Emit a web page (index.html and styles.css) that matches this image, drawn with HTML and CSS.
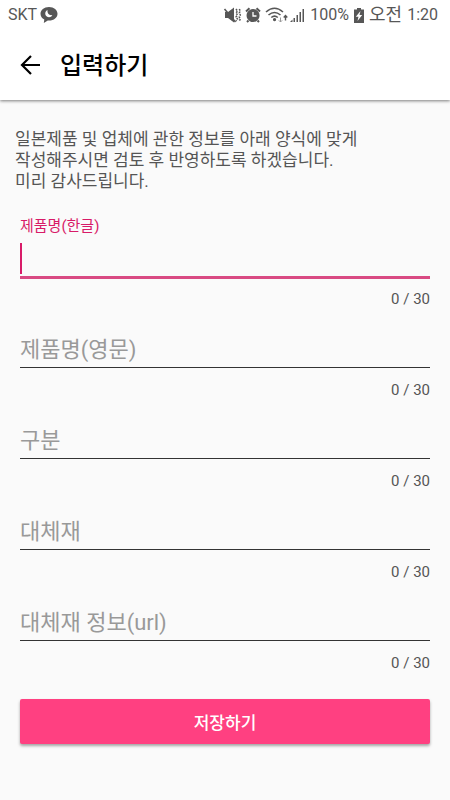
FILE: index.html
```html
<!DOCTYPE html>
<html lang="ko">
<head>
<meta charset="utf-8">
<meta name="viewport" content="width=device-width, initial-scale=1">
<title>입력하기</title>
<link rel="stylesheet" href="styles.css">
</head>
<body>
<header class="top">
  <div class="status">
    <span>SKT</span>
    <svg class="talk" width="18" height="16" viewBox="0 0 18 16" aria-hidden="true"><path fill="#575757" d="M9 0C4 0 .5 3 .5 6.800c0 2.500 1.500 4.600 3.800 5.800L3.800 16l4-2.500L9 13.600c5 0 8.500-3 8.500-6.800S14 0 9 0z"/><path fill="#fff" d="M7.500 3C5 4 4.500 7.500 6.500 9.300c2 1.700 5 1 5.800-1.300C9.500 8.800 7 6.500 7.500 3z"/></svg>
    <div class="indicators">
      <svg width="82" height="18" viewBox="0 0 82 18" aria-hidden="true">
        <g fill="#575757">
          <path d="M2 6h3l6-4.500v15L5 12H2z"/>
          <path d="M30 3a6.500 6.500 0 1 0 .1 0z"/>
          <path d="M23 5.500 26.500 2.300M37 5.500 33.500 2.300M25.500 14.500 24 16M34.500 14.500l1.500 1.500" stroke="#575757" stroke-width="2"/>
          <path d="M51.500 12a1.600 1.600 0 1 0 .1 0zM67 16l2.500-2.500V16zM70.500 12h1.500v4h-1.500zM73.500 9H75v7h-1.500zM76.500 6H78v10h-1.500zM79.500 3H81v13h-1.500z"/>
        </g>
        <g fill="none" stroke="#575757">
          <path stroke-width="1.500" stroke-dasharray="1.800 1" d="m13 3 1.500 2L13 7l1.500 2-1.500 2 1.500 2-1.500 2M16.300 3l1 2-1 2 1 2-1 2 1 2-1 2"/>
          <path stroke-width="1.600" d="M43 6c5.500-4.800 11.500-4.800 17 0M45.500 9c4-3.300 8-3.300 12 0M48.300 11.500c2-1.700 4.500-1.700 6.500 0"/>
          <path stroke="#999" d="M57.500 11.500v4.500m-1.700-1.700 1.700 1.700 1.700-1.700"/>
          <path stroke-width="1.400" d="M62.500 14.500v-5m-1.800 1.900 1.800-1.800 1.800 1.800"/>
        </g>
        <path d="m1.500 3 11 13" stroke="#575757" stroke-width="1.600"/>
        <path d="M30 6v4h3.500" fill="none" stroke="#fff" stroke-width="1.300"/>
      </svg>
      <span>100%</span>
      <svg class="battery" width="10" height="15" viewBox="0 0 10 15" aria-hidden="true"><path fill="#575757" d="M3 0h4v1.500h3V15H0V1.500h3z"/><path fill="#fff" d="M6.500 3 1.800 8.800h2.700L3.500 13l4.700-6H5.500z"/></svg>
      <span class="ampm">오전</span>
      <span>1:20</span>
    </div>
  </div>
  <div class="bar">
    <button class="back" type="button" aria-label="뒤로"><svg width="22" height="22" viewBox="0 0 22 22" aria-hidden="true"><path d="M20 11H2M11 2l-9 9 9 9" fill="none" stroke="#000" stroke-width="2.200"/></svg></button>
    <h1>입력하기</h1>
  </div>
</header>
<main>
  <p class="intro">일본제품 및 업체에 관한 정보를 아래 양식에 맞게<br>작성해주시면 검토 후 반영하도록 하겠습니다.<br>미리 감사드립니다.</p>
  <form>
    <div class="field active">
      <label for="name-ko">제품명(한글)</label>
      <input id="name-ko" type="text" maxlength="30">
      <span class="count">0 / 30</span>
    </div>
    <div class="field">
      <label for="name-en">제품명(영문)</label>
      <input id="name-en" type="text" maxlength="30">
      <span class="count">0 / 30</span>
    </div>
    <div class="field">
      <label for="category">구분</label>
      <input id="category" type="text" maxlength="30">
      <span class="count">0 / 30</span>
    </div>
    <div class="field">
      <label for="substitute">대체재</label>
      <input id="substitute" type="text" maxlength="30">
      <span class="count">0 / 30</span>
    </div>
    <div class="field">
      <label for="url">대체재 정보(url)</label>
      <input id="url" type="text" maxlength="30">
      <span class="count">0 / 30</span>
    </div>
    <button class="save" type="button">저장하기</button>
  </form>
</main>
</body>
</html>
```
FILE: styles.css
```css
* {
  box-sizing: border-box;
}

body {
  margin: 0;
  min-height: 100vh;
  background: #fafafa;
  color: #555;
  font-family: Roboto, "Noto Sans CJK KR", sans-serif;
}

.top {
  background: #fff;
  box-shadow: 0 1px 3px rgba(0, 0, 0, 0.5);
}

.status {
  display: flex;
  align-items: center;
  height: 30px;
  padding: 0 12px 0 8px;
  font-size: 16px;
  line-height: 30px;
  color: #575757;
}

.talk {
  margin-left: 3px;
}

.indicators {
  display: flex;
  align-items: center;
  gap: 5px;
  margin-left: auto;
}

.ampm {
  font-size: 18px;
}

.bar {
  display: flex;
  align-items: center;
  gap: 18px;
  height: 70px;
  padding: 0 20px;
}

.back {
  display: flex;
  padding: 0;
  border: 0;
  background: none;
}

h1 {
  margin: 0;
  padding-top: 2px;
  font-size: 24px;
  font-weight: 500;
  line-height: 36px;
  color: #000;
}

main {
  padding: 29px 20px;
}

.intro {
  margin: 0 -5px 26px;
  font-family: Roboto, "Noto Sans CJK KR", sans-serif;
  font-size: 17px;
  line-height: 21px;
}

.field {
  position: relative;
  display: flex;
  flex-direction: column;
  padding-top: 18px;
}

.field label {
  position: absolute;
  top: 25px;
  left: 0;
  font-size: 22px;
  line-height: 32px;
  color: #999;
}

.field input {
  width: 100%;
  height: 41px;
  padding: 0;
  border: 0;
  border-bottom: 1px solid #333;
  background: none;
  outline: none;
  font: inherit;
  font-size: 22px;
}

.field.active label {
  top: 0;
  font-size: 15px;
  line-height: 16px;
  color: #d81b68;
}

.active input {
  border-color: #d94a83;
  box-shadow: 0 2px 0 #d94a83;
}

/* Text cursor of the focused field */
.active::before {
  content: "";
  position: absolute;
  top: 25px;
  left: 0;
  width: 2px;
  height: 31px;
  background: #d81b68;
}

.count {
  align-self: flex-end;
  margin-top: 12px;
  font-size: 15px;
  line-height: 20px;
}

.save {
  display: block;
  width: 100%;
  height: 45px;
  margin-top: 26px;
  padding: 0;
  border: 0;
  border-radius: 2px;
  background: #ff4081;
  box-shadow: 0 2px 3px rgba(0, 0, 0, 0.35);
  color: #fff;
  font-family: inherit;
  font-size: 17px;
  font-weight: 500;
}
```
